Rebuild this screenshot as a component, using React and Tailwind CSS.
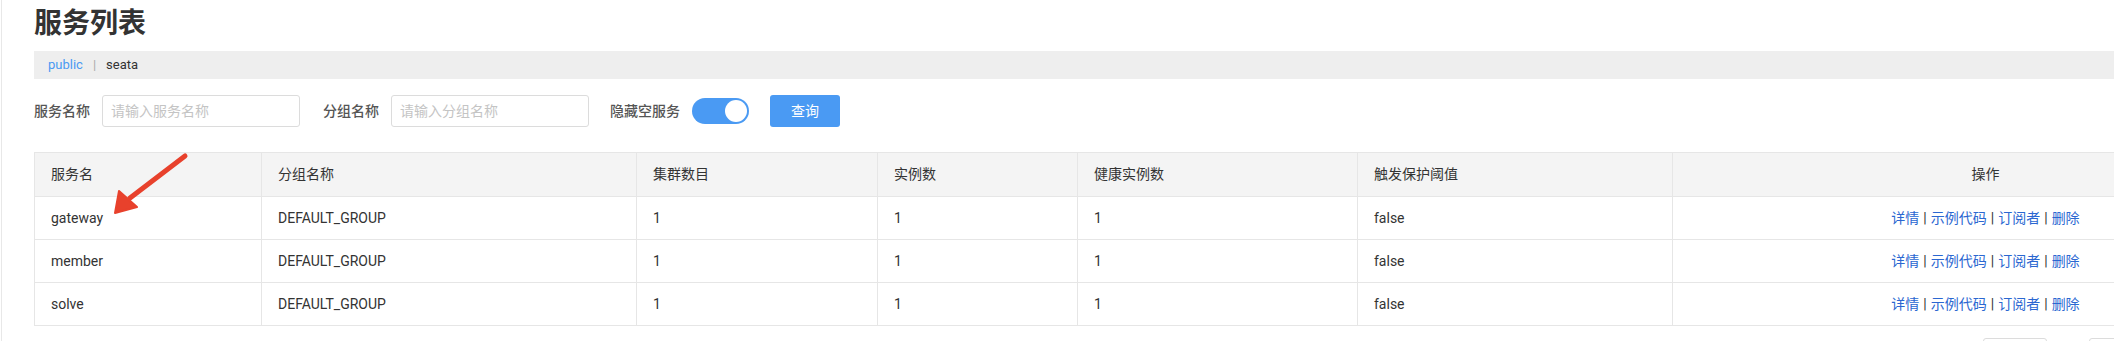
import React, { useState } from 'react';

const services = [
  { name: 'gateway', group: 'DEFAULT_GROUP', clusters: 1, instances: 1, healthy: 1, threshold: 'false' },
  { name: 'member', group: 'DEFAULT_GROUP', clusters: 1, instances: 1, healthy: 1, threshold: 'false' },
  { name: 'solve', group: 'DEFAULT_GROUP', clusters: 1, instances: 1, healthy: 1, threshold: 'false' },
];

const font = { fontFamily: 'Roboto, "Noto Sans CJK SC", sans-serif' };

function Toggle({ on, onChange }) {
  return (
    <button
      onClick={() => onChange(!on)}
      className={`relative w-[57px] h-[26px] rounded-full ${on ? 'bg-[#4a9af3]' : 'bg-[#d9d9d9]'}`}
    >
      <span
        className={`absolute top-[2px] w-[22px] h-[22px] rounded-full bg-white ${on ? 'right-[2px]' : 'left-[2px]'}`}
      />
    </button>
  );
}

function App() {
  const [hideEmpty, setHideEmpty] = useState(true);
  const [serviceName, setServiceName] = useState('');
  const [groupName, setGroupName] = useState('');

  return (
    <div className="w-[2114px] h-[341px] overflow-hidden bg-white" style={font}>
      <div className="relative h-full ml-[1px] border-l border-[#e8e8e8] pl-[32px]">
        <h1 className="pt-[6px] h-[42px] leading-[36px] text-[28px] font-semibold text-[#333]">服务列表</h1>

        {/* namespace bar */}
        <div className="mt-[9px] h-[28px] bg-[#eeeeee] flex items-center pl-[14px] text-[13px]">
          <span className="text-[#4a9af3]">public</span>
          <span className="mx-[10px] text-[#aaa]">|</span>
          <span className="text-[#333]">seata</span>
        </div>

        {/* filters */}
        <div className="mt-[16px] flex items-center h-[32px] text-[14px]">
          <span className="font-medium text-[#555] mr-[12px]">服务名称</span>
          <input
            value={serviceName}
            onChange={(e) => setServiceName(e.target.value)}
            placeholder="请输入服务名称"
            className="w-[198px] h-[32px] border border-[#dcdcdc] rounded-[3px] px-[8px] placeholder-[#c4c4c4] outline-none"
          />
          <span className="font-medium text-[#555] ml-[23px] mr-[12px]">分组名称</span>
          <input
            value={groupName}
            onChange={(e) => setGroupName(e.target.value)}
            placeholder="请输入分组名称"
            className="w-[198px] h-[32px] border border-[#dcdcdc] rounded-[3px] px-[8px] placeholder-[#c4c4c4] outline-none"
          />
          <span className="font-medium text-[#555] ml-[21px] mr-[12px]">隐藏空服务</span>
          <Toggle on={hideEmpty} onChange={setHideEmpty} />
          <button className="ml-[21px] w-[70px] h-[32px] rounded-[3px] bg-[#4a9af3] text-white text-[14px]">查询</button>
        </div>

        {/* table */}
        <table className="mt-[25px] w-[2264px] table-fixed border-collapse text-[14px] text-[#333]">
          <thead>
            <tr className="bg-[#f4f4f4] h-[44px]">
              <th className="w-[227px] border border-[#e6e6e6] text-left font-normal pl-[16px]">服务名</th>
              <th className="w-[375px] border border-[#e6e6e6] text-left font-normal pl-[16px]">分组名称</th>
              <th className="w-[241px] border border-[#e6e6e6] text-left font-normal pl-[16px]">集群数目</th>
              <th className="w-[200px] border border-[#e6e6e6] text-left font-normal pl-[16px]">实例数</th>
              <th className="w-[280px] border border-[#e6e6e6] text-left font-normal pl-[16px]">健康实例数</th>
              <th className="w-[315px] border border-[#e6e6e6] text-left font-normal pl-[16px]">触发保护阈值</th>
              <th className="w-[626px] border border-[#e6e6e6] text-center font-normal">操作</th>
            </tr>
          </thead>
          <tbody>
            {services.map((s) => (
              <tr key={s.name} className="h-[43px]">
                <td className="border border-[#e6e6e6] pl-[16px]">{s.name}</td>
                <td className="border border-[#e6e6e6] pl-[16px]">{s.group}</td>
                <td className="border border-[#e6e6e6] pl-[16px]">{s.clusters}</td>
                <td className="border border-[#e6e6e6] pl-[16px]">{s.instances}</td>
                <td className="border border-[#e6e6e6] pl-[16px]">{s.healthy}</td>
                <td className="border border-[#e6e6e6] pl-[16px]">{s.threshold}</td>
                <td className="border border-[#e6e6e6] text-center">
                  <a className="text-[#2b67d1] cursor-pointer">详情</a>
                  <span className="mx-[4px]">|</span>
                  <a className="text-[#2b67d1] cursor-pointer">示例代码</a>
                  <span className="mx-[4px]">|</span>
                  <a className="text-[#2b67d1] cursor-pointer">订阅者</a>
                  <span className="mx-[4px]">|</span>
                  <a className="text-[#2b67d1] cursor-pointer">删除</a>
                </td>
              </tr>
            ))}
          </tbody>
        </table>

        {/* pagination (cut off at the bottom) */}
        <div className="mt-[12px] w-[2264px] flex justify-end gap-[42px] pr-[177px]">
          <div className="w-[64px] h-[28px] border border-[#dcdcdc] rounded-[3px]" />
          <div className="w-[32px] h-[28px] border border-[#dcdcdc] rounded-[3px]" />
        </div>

        {/* red annotation arrow */}
        <svg className="absolute left-[100px] top-[150px]" width="95" height="70" viewBox="0 0 95 70">
          <line x1="83" y1="6" x2="28" y2="48" stroke="#e8412c" strokeWidth="5" strokeLinecap="round" />
          <polygon points="13,63 17,41 35,57" fill="#e8412c" stroke="#e8412c" strokeWidth="2" strokeLinejoin="round" />
        </svg>
      </div>
    </div>
  );
}

export default App;
